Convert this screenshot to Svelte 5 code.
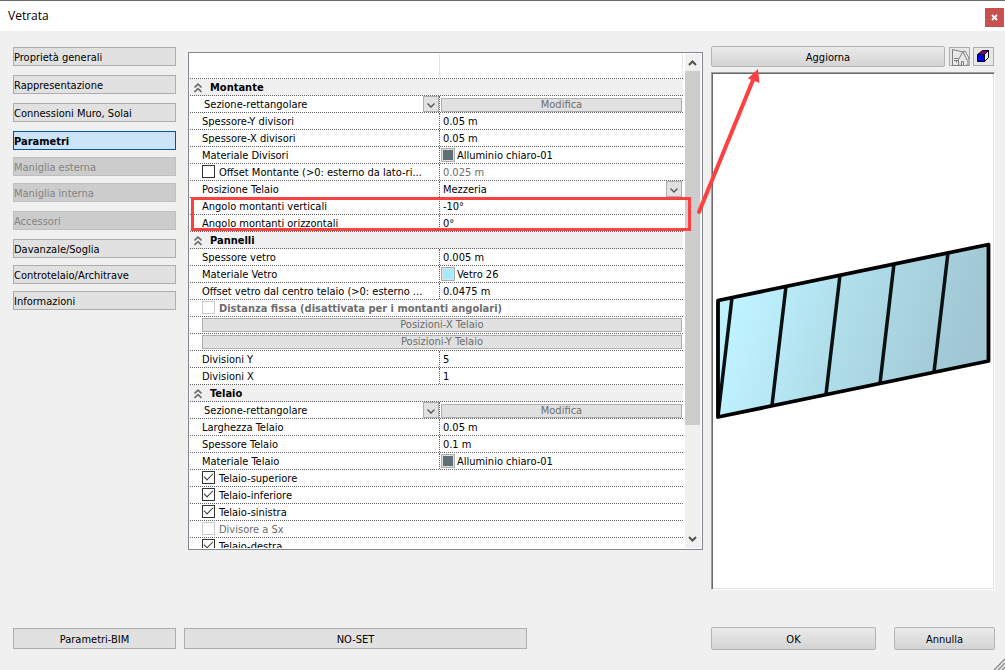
<script lang="ts">
	type Row = {
		kind: 'value' | 'material' | 'check' | 'select' | 'section' | 'button';
		label: string;
		value?: string;
		color?: string;
		checked?: boolean;
		disabled?: boolean;
		bold?: boolean;
		marked?: boolean;
	};

	const menu = [
		{ label: 'Proprietà generali' },
		{ label: 'Rappresentazione' },
		{ label: 'Connessioni Muro, Solai' },
		{ label: 'Parametri' },
		{ label: 'Maniglia esterna', disabled: true, tight: true },
		{ label: 'Maniglia interna', disabled: true, tight: true },
		{ label: 'Accessori', disabled: true },
		{ label: 'Davanzale/Soglia' },
		{ label: 'Controtelaio/Architrave', tight: true },
		{ label: 'Informazioni', tight: true }
	];

	const groups: { title: string; rows: Row[] }[] = [
		{
			title: 'Montante',
			rows: [
				{ kind: 'section', label: 'Sezione-rettangolare' },
				{ kind: 'value', label: 'Spessore-Y divisori', value: '0.05 m' },
				{ kind: 'value', label: 'Spessore-X divisori', value: '0.05 m' },
				{ kind: 'material', label: 'Materiale Divisori', value: 'Alluminio chiaro-01', color: '#5f6f76' },
				{ kind: 'check', label: 'Offset Montante (>0: esterno da lato-ri...', value: '0.025 m' },
				{ kind: 'select', label: 'Posizione Telaio', value: 'Mezzeria' },
				{ kind: 'value', label: 'Angolo montanti verticali', value: '-10°', marked: true },
				{ kind: 'value', label: 'Angolo montanti orizzontali', value: '0°', marked: true }
			]
		},
		{
			title: 'Pannelli',
			rows: [
				{ kind: 'value', label: 'Spessore vetro', value: '0.005 m' },
				{ kind: 'material', label: 'Materiale Vetro', value: 'Vetro 26', color: '#a6e9ff' },
				{ kind: 'value', label: 'Offset vetro dal centro telaio (>0: esterno ...', value: '0.0475 m' },
				{ kind: 'check', label: 'Distanza fissa (disattivata per i montanti angolari)', disabled: true, bold: true },
				{ kind: 'button', label: 'Posizioni-X Telaio' },
				{ kind: 'button', label: 'Posizioni-Y Telaio' },
				{ kind: 'value', label: 'Divisioni Y', value: '5' },
				{ kind: 'value', label: 'Divisioni X', value: '1' }
			]
		},
		{
			title: 'Telaio',
			rows: [
				{ kind: 'section', label: 'Sezione-rettangolare' },
				{ kind: 'value', label: 'Larghezza Telaio', value: '0.05 m' },
				{ kind: 'value', label: 'Spessore Telaio', value: '0.1 m' },
				{ kind: 'material', label: 'Materiale Telaio', value: 'Alluminio chiaro-01', color: '#5f6f76' },
				{ kind: 'check', label: 'Telaio-superiore', checked: true },
				{ kind: 'check', label: 'Telaio-inferiore', checked: true },
				{ kind: 'check', label: 'Telaio-sinistra', checked: true },
				{ kind: 'check', label: 'Divisore a Sx', disabled: true },
				{ kind: 'check', label: 'Telaio-destra', checked: true }
			]
		}
	];

	// mullion axes: [x at the top rail, x at the bottom rail]
	const mullions = [[17, 3], [71, 57], [125, 111], [179, 165], [233, 219]];
	const topY = (x: number) => 59 - x * 0.208;
	const bottomY = (x: number) => 175 - x * 0.205;

	let active = $state('Parametri');
</script>

{#snippet arrow()}
	<svg class="drop" viewBox="0 0 16 16" aria-hidden="true">
		<rect x="0.5" y="0.5" width="15" height="15" fill="#e1e1e1" stroke="#adadad" />
		<path d="M4.5 7.5L8 11L11.5 7.5" fill="none" stroke="#555" stroke-width="1.3" />
	</svg>
{/snippet}

{#snippet property(row: Row, id: string)}
	{#if row.kind === 'button'}
		<div class="row"><button class="flat wide" disabled>{row.label}</button></div>
	{:else if row.kind === 'check'}
		<div class="row" class:split={row.value}>
			<div class="cell check">
				<input type="checkbox" {id} checked={row.checked} disabled={row.disabled} />
				<label for={id} class:dim={row.disabled} class:bold={row.bold}>{row.label}</label>
			</div>
			{#if row.value}
				<div class="cell data"><input type="text" class="dim" value={row.value} aria-label={row.label} disabled /></div>
			{/if}
		</div>
	{:else if row.kind === 'section'}
		<div class="row split">
			<div class="cell combo section">
				<select {id} aria-label="Sezione"><option>{row.label}</option></select>
				{@render arrow()}
			</div>
			<div class="cell data"><button class="flat" disabled>Modifica</button></div>
		</div>
	{:else}
		<div class="row split">
			<div class="cell name"><label for={id}>{row.label}</label></div>
			{#if row.kind === 'select'}
				<div class="cell data combo">
					<select {id}><option>{row.value}</option></select>
					{@render arrow()}
				</div>
			{:else if row.kind === 'material'}
				<div class="cell data">
					<button class="material" {id}>
						<span class="swatch" style:background={row.color}></span>
						<span class="caption">{row.value}</span>
					</button>
				</div>
			{:else}
				<div class="cell data"><input type="text" {id} value={row.value} /></div>
			{/if}
		</div>
	{/if}
{/snippet}

<div class="dialog">
	<header>
		<span>Vetrata</span>
		<button class="close" aria-label="Chiudi">
			<svg viewBox="0 0 19 19"><path d="M7 7l5 5M12 7l-5 5" stroke="#fff" stroke-width="1.8" /></svg>
		</button>
	</header>

	<main>
		<nav>
			{#each menu as item}
				<button
					class="flat item"
					class:active={active === item.label}
					class:tight={item.tight}
					disabled={item.disabled}
					onclick={() => (active = item.label)}
				>{item.label}</button>
			{/each}
		</nav>

		<section class="list">
			<div class="rows">
				<div class="head"><span></span><span></span></div>
				{#each groups as group, g}
					<h2>
						<svg viewBox="0 0 8 10" aria-hidden="true">
							<path d="M0.5 4.5L4 1.2L7.5 4.5M0.5 9L4 5.7L7.5 9" fill="none" stroke="#6a6a6a" stroke-width="1.6" />
						</svg>
						<span class="caption">{group.title}</span>
					</h2>
					{#each group.rows as row, i}
						{#if !row.marked}{@render property(row, `p${g}-${i}`)}{/if}
					{/each}
					{#if group.rows.some((r) => r.marked)}
						<div class="marked">
							{#each group.rows as row, i}
								{#if row.marked}{@render property(row, `p${g}-${i}`)}{/if}
							{/each}
						</div>
					{/if}
				{/each}
			</div>
			<div class="scroll" aria-hidden="true">
				<svg viewBox="0 0 16 17"><path d="M4 11L7.5 7.5L11 11" fill="none" stroke="#505050" stroke-width="2" /></svg>
				<div class="track"><div class="thumb"></div></div>
				<svg viewBox="0 0 16 17"><path d="M4 6L7.5 9.5L11 6" fill="none" stroke="#505050" stroke-width="2" /></svg>
			</div>
		</section>

		<section class="preview">
			<div class="tools">
				<button class="raised">Aggiorna</button>
				<button class="flat icon" aria-label="Vista modello">
					<svg viewBox="0 0 21 19" fill="none" stroke="#808080">
						<path d="M3.5 2.5V18M3.5 2.5L14 5M14 4.5L9.5 12.5M14 4.500L16 4L20 11L19 12.500V17.500M14 5L18 13M9.5 12.500V18L16 19L19.500 17.500M3 18.500H10" />
						<path d="M5 11.5H9.5M5 13.5H9M7.5 13.5V15.5M12.5 18V14.5H14.5V18.5" />
					</svg>
				</button>
				<button class="flat icon" aria-label="Vista 3D">
					<svg viewBox="0 0 21 19" stroke="#000" stroke-linejoin="round">
						<path d="M4.5 7.5L9.5 3.5H15.5L11.5 7.5Z" fill="#800080" />
						<path d="M11.5 7.5L15.5 3.5V10.5L11.5 14.5Z" fill="#e8e8e8" />
						<path d="M4.5 7.5H11.5V14.5H4.5Z" fill="#0000ff" />
					</svg>
				</button>
			</div>
			<div class="canvas">
				<svg viewBox="0 0 276 178" role="img" aria-label="Anteprima vetrata">
					<defs>
						<linearGradient id="glass" x1="0" y1="0" x2="1" y2="0.2">
							<stop offset="0" stop-color="#bdf2ff" />
							<stop offset="0.15" stop-color="#bff2ff" />
							<stop offset="0.5" stop-color="#b0dfeb" />
							<stop offset="1" stop-color="#a0c7d3" />
						</linearGradient>
					</defs>
					<path d="M3 58.5L273.5 2.5V119L3 175Z" fill="url(#glass)" />
					{#each mullions as [top, bottom]}
						<path d="M{top} {topY(top)}L{bottom} {bottomY(bottom)}" stroke="#0b1011" stroke-width="3.5" />
					{/each}
					<path d="M3 58.5L273.5 2.5V119L3 175Z" fill="none" stroke="#000" stroke-width="3.8" stroke-linejoin="round" />
				</svg>
			</div>
			<svg class="pointer" viewBox="0 0 66 146" aria-hidden="true">
				<path d="M3 142L57 10" stroke="#ff4040" stroke-width="4" stroke-linecap="round" />
				<path d="M62 -1L63.5 13L52 8.5Z" fill="#ff4040" />
			</svg>
		</section>
	</main>

	<footer>
		<button class="flat bim">Parametri-BIM</button>
		<button class="flat set">NO-SET</button>
		<div class="confirm">
			<button class="raised">OK</button>
			<button class="raised">Annulla</button>
		</div>
	</footer>

	<svg class="grip" viewBox="0 0 12 12" aria-hidden="true">
		<path d="M1 12L12 1M5 12L12 5M9 12L12 9" stroke="#8c8c8c" stroke-width="1.4" />
	</svg>
</div>

<style>
	:global(body) { margin: 0; }

	.dialog {
		position: relative;
		display: flex;
		flex-direction: column;
		height: 100vh;
		box-sizing: border-box;
		overflow: hidden;
		border-top: 1px solid #6a6a6a;
		background: #f0f0f0;
		color: #000;
		font: 11px/16px "DejaVu Sans Condensed", "DejaVu Sans", sans-serif;
	}

	button, input, select { font: inherit; color: inherit; margin: 0; box-sizing: border-box; }
	svg { display: block; }

	header {
		display: flex;
		align-items: center;
		justify-content: space-between;
		height: 30px;
		padding: 0 1px 0 8px;
		background: #fff;
		font: 12px/16px "Open Sans", "Noto Sans", sans-serif;
	}
	.close { width: 19px; height: 19px; padding: 0; border: none; background: #c75050; margin-top: 3px; }

	main {
		flex: 1;
		min-height: 0;
		display: grid;
		grid-template-columns: 163px minmax(0, 1fr) 284px;
		padding: 15px 10px 0 13px;
	}

	.flat { border: 1px solid #adadad; background: #e1e1e1; padding: 0; }
	.raised {
		border: 1px solid #b4b4b4;
		border-radius: 2px;
		background: linear-gradient(#ebebeb, #d4d4d4);
		padding: 2px 0 0;
		line-height: 16px;
	}

	/* Menu */
	nav { display: flex; flex-direction: column; padding-top: 1px; }
	.item { height: 19px; padding: 2px 0 0; text-align: left; line-height: 15px; }
	.item + .item { margin-top: 9px; }
	.item + .tight { margin-top: 7px; }
	.item:disabled { background: #ccc; border-color: #bfbfbf; color: #838383; }
	.active { background: #cce4f7; border-color: #005499; font-weight: bold; }

	/* Property list */
	.list {
		display: flex;
		gap: 2px;
		margin: 6px 8px 40px 12px;
		padding: 1px;
		border: 1px solid #828790;
		background: #fff;
		min-height: 0;
	}
	.rows { flex: 1; min-width: 0; overflow-x: visible; overflow-y: clip; }
	.head { display: grid; grid-template-columns: 51fr 50fr; height: 24px; border-bottom: 1px dotted #606060; }
	.head span + span { border: solid #e5e5e5; border-width: 0 1px; }

	h2 {
		display: flex;
		align-items: center;
		gap: 8px;
		height: 16px;
		margin: 0;
		padding-left: 4px;
		border-bottom: 1px dotted #606060;
		background: #f0f0f0;
		font-size: 11px;
	}
	h2 svg { width: 8px; height: 10px; margin-top: 2px; }

	.row { display: grid; height: 16px; border-bottom: 1px dotted #606060; }
	.split { grid-template-columns: 51fr 50fr; }
	.cell { display: flex; align-items: center; min-width: 0; height: 16px; white-space: nowrap; }
	.cell label, .caption { padding-top: 2px; }
	.name { padding-left: 12px; }
	.data { border-left: 1px dotted #606060; padding: 0 1px; }
	.data .flat { flex: 1; }
	.row .flat { height: 14px; margin-top: 1px; color: #6d6d6d; line-height: 12px; }
	.row .wide { margin: 1px 1px 0 12px; }

	input[type="text"] { width: 100%; height: 16px; padding: 1px 2px 0; border: none; background: none; line-height: 15px; }
	.dim, input.dim { color: #6d6d6d; }
	.bold { font-weight: bold; }

	.check { gap: 4px; padding-left: 12px; }
	input[type="checkbox"] {
		appearance: none;
		flex: none;
		width: 13px;
		height: 13px;
		margin-bottom: 2px;
		border: 1px solid #333;
		background: #fff;
	}
	input[type="checkbox"]:checked::after {
		content: "";
		display: block;
		width: 8px;
		height: 4px;
		margin: 1px 0 0 1px;
		border: solid #333;
		border-width: 0 0 1px 1px;
		transform: rotate(-45deg);
	}
	input[type="checkbox"]:disabled { border-color: #ccc; }

	.combo { display: grid; grid-template-columns: minmax(0, 1fr) 16px; }
	.combo select {
		grid-area: 1 / 1 / 2 / 3;
		appearance: none;
		width: 100%;
		height: 16px;
		padding: 2px 16px 0 2px;
		border: none;
		background: none;
		line-height: 14px;
	}
	.section { padding-left: 12px; }
	.drop { grid-area: 1 / 2; width: 16px; height: 16px; pointer-events: none; }

	.material { display: flex; align-items: center; gap: 2px; padding: 0; border: none; background: none; }
	.swatch {
		width: 14px;
		height: 14px;
		box-sizing: border-box;
		border: 1px solid #adadad;
		box-shadow: inset 0 0 0 1px #e1e1e1;
	}

	.marked { position: relative; }
	.marked::after {
		content: "";
		position: absolute;
		z-index: 1;
		inset: -1px -8px 1px 1px;
		border: 3px solid #ff4040;
		pointer-events: none;
	}

	.scroll { display: flex; flex-direction: column; width: 16px; background: #f0f0f0; }
	.scroll svg { width: 16px; height: 17px; }
	.track { flex: 1; }
	.thumb { width: 15px; height: 77%; background: #cdcdcd; }

	/* Preview */
	.preview { position: relative; display: flex; flex-direction: column; min-height: 0; }
	.tools { display: flex; align-items: center; gap: 3px; padding-right: 1px; }
	.tools .raised { flex: 1; height: 21px; margin-right: 1px; }
	.icon { width: 21px; height: 19px; background: #e8e8e8; }
	.icon svg { width: 21px; height: 19px; margin: -1px; }
	.canvas {
		flex: 1;
		min-height: 0;
		display: flex;
		align-items: center;
		margin-top: 5px;
		padding: 0 3px;
		border: 1px solid #fff;
		border-top-color: #a0a0a0;
		border-left-color: #a0a0a0;
		background: #fff;
		box-shadow: inset 1px 1px #696969, inset -1px -1px #e3e3e3;
	}
	.canvas svg { width: 100%; }
	.pointer {
		position: absolute;
		z-index: 2;
		top: 24px;
		left: -15px;
		width: 66px;
		height: 146px;
		overflow: visible;
		pointer-events: none;
	}

	/* Bottom buttons */
	footer { display: flex; align-items: center; gap: 8px; padding: 37px 10px 20px 13px; }
	footer .flat { height: 21px; padding-top: 2px; line-height: 16px; }
	footer .raised { height: 23px; }
	.bim { width: 163px; }
	.set { flex: 0 1 343px; }
	.confirm { display: grid; grid-template-columns: 165fr 101fr; gap: 18px; width: 284px; margin-left: auto; }

	.grip { position: absolute; right: 0; bottom: 0; width: 12px; height: 12px; }
</style>
